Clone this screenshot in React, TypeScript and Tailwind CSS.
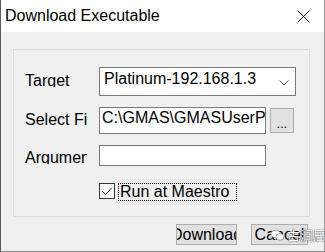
import React from 'react';

const FONT = { fontFamily: '"Liberation Sans", Arial, sans-serif' };

function Label({ text, top }: { text: string; top: string }) {
  return (
    <div className={`w-[62px] h-[15px] overflow-hidden whitespace-nowrap text-[16px] leading-[18px] text-black ${top}`}>
      {text}
    </div>
  );
}

export default function App() {
  return (
    <div
      style={FONT}
      className="w-[325px] h-[252px] flex flex-col bg-white border-l border-l-[#5a5a5a] border-r border-r-[#9a9a9a] border-b border-b-[#8a8a8a] overflow-hidden"
    >
      {/* ── Title bar ── */}
      <div className="h-[32px] flex items-start justify-between pl-[4px] pr-[14px] pt-[7px] shrink-0">
        <span className="text-[16px] leading-[18px] text-black">Download Executable</span>
        <svg width="13" height="13" viewBox="0 0 13 13" className="mt-[3px]">
          <path d="M0.5 0.5 L12.5 12.5 M12.5 0.5 L0.5 12.5" stroke="#111" strokeWidth="1" fill="none" />
        </svg>
      </div>

      {/* ── Body ── */}
      <div className="flex-1 bg-[#f0f0f0] pl-[12px] pt-[17px] flex flex-col">
        <div className="w-[297px] h-[168px] border border-[#dcdcdc] pl-[11px] pt-[17px] flex flex-col">
          {/* Target */}
          <div className="flex items-start">
            <Label text="Target" top="mt-[5px]" />
            <div className="ml-[12px] w-[197px] h-[29px] bg-white border border-[#7a7a7a] flex items-start justify-between pl-[4px] pr-[6px] pt-[2px]">
              <span className="text-[16px] leading-[18px] text-black whitespace-nowrap">Platinum-192.168.1.3</span>
              <svg width="10" height="6" viewBox="0 0 10 6" className="mt-[10px]">
                <path d="M0.5 0.5 L5 5 L9.5 0.5" stroke="#555" strokeWidth="1" fill="none" />
              </svg>
            </div>
          </div>

          {/* Select File */}
          <div className="flex items-start mt-[11px]">
            <Label text="Select File" top="mt-[4px]" />
            <div className="ml-[12px] w-[167px] h-[27px] bg-white border border-[#7a7a7a] overflow-hidden pl-[2px] pt-[1px]">
              <span className="block text-[16px] leading-[18px] text-black whitespace-nowrap">
                C:\GMAS\GMASUserProgram.gpp
              </span>
            </div>
            <div className="ml-[4px] mt-[1px] w-[24px] h-[25px] bg-[#e1e1e1] border border-[#adadad] flex items-end justify-center pb-[4px]">
              <span className="text-[13px] leading-[8px] text-black">...</span>
            </div>
          </div>

          {/* Arguments */}
          <div className="flex items-start mt-[11px]">
            <Label text="Arguments" top="mt-[4px]" />
            <div className="ml-[12px] w-[167px] h-[21px] bg-white border border-[#7a7a7a]" />
          </div>

          {/* Run at Maestro */}
          <div className="flex items-start mt-[17px] ml-[74px]">
            <div className="w-[16px] h-[16px] bg-white border border-[#333] flex items-center justify-center">
              <svg width="12" height="10" viewBox="0 0 12 10">
                <path d="M1 5 L4.5 8.5 L11 1.5" stroke="#333" strokeWidth="1" fill="none" />
              </svg>
            </div>
            <span className="ml-[3px] w-[119px] h-[18px] pl-[1px] border border-dotted border-black text-[16px] leading-[16px] text-black whitespace-nowrap">
              Run at Maestro
            </span>
          </div>
        </div>

        {/* ── Buttons ── */}
        <div className="flex mt-[7px] ml-[163px] gap-[14px]">
          <div className="w-[61px] h-[21px] bg-[#e1e1e1] border border-[#adadad] overflow-hidden flex justify-center">
            <span className="text-[16px] leading-[18px] pt-[1px] text-black whitespace-nowrap">Download</span>
          </div>
          <div className="relative w-[57px] h-[21px] bg-[#e1e1e1] border border-[#adadad] flex justify-center">
            <span className="text-[16px] leading-[18px] pt-[1px] text-black whitespace-nowrap">Cancel</span>
            {/* watermark */}
            <div className="absolute left-[18px] top-[2px] flex items-center gap-[2px]">
              <svg width="15" height="14" viewBox="0 0 16 14">
                <ellipse cx="6" cy="6" rx="5" ry="4.2" fill="#fff" stroke="#888" strokeWidth="0.8" />
                <ellipse cx="10.5" cy="9" rx="4.2" ry="3.5" fill="#fff" stroke="#888" strokeWidth="0.8" />
              </svg>
              <span
                className="text-[13px] leading-[16px] text-white whitespace-nowrap [text-shadow:0_0_1px_#333,0_0_1px_#333]"
                style={{ fontFamily: '"Noto Sans CJK SC", sans-serif' }}
              >
                古润居
              </span>
            </div>
          </div>
        </div>
      </div>
    </div>
  );
}
